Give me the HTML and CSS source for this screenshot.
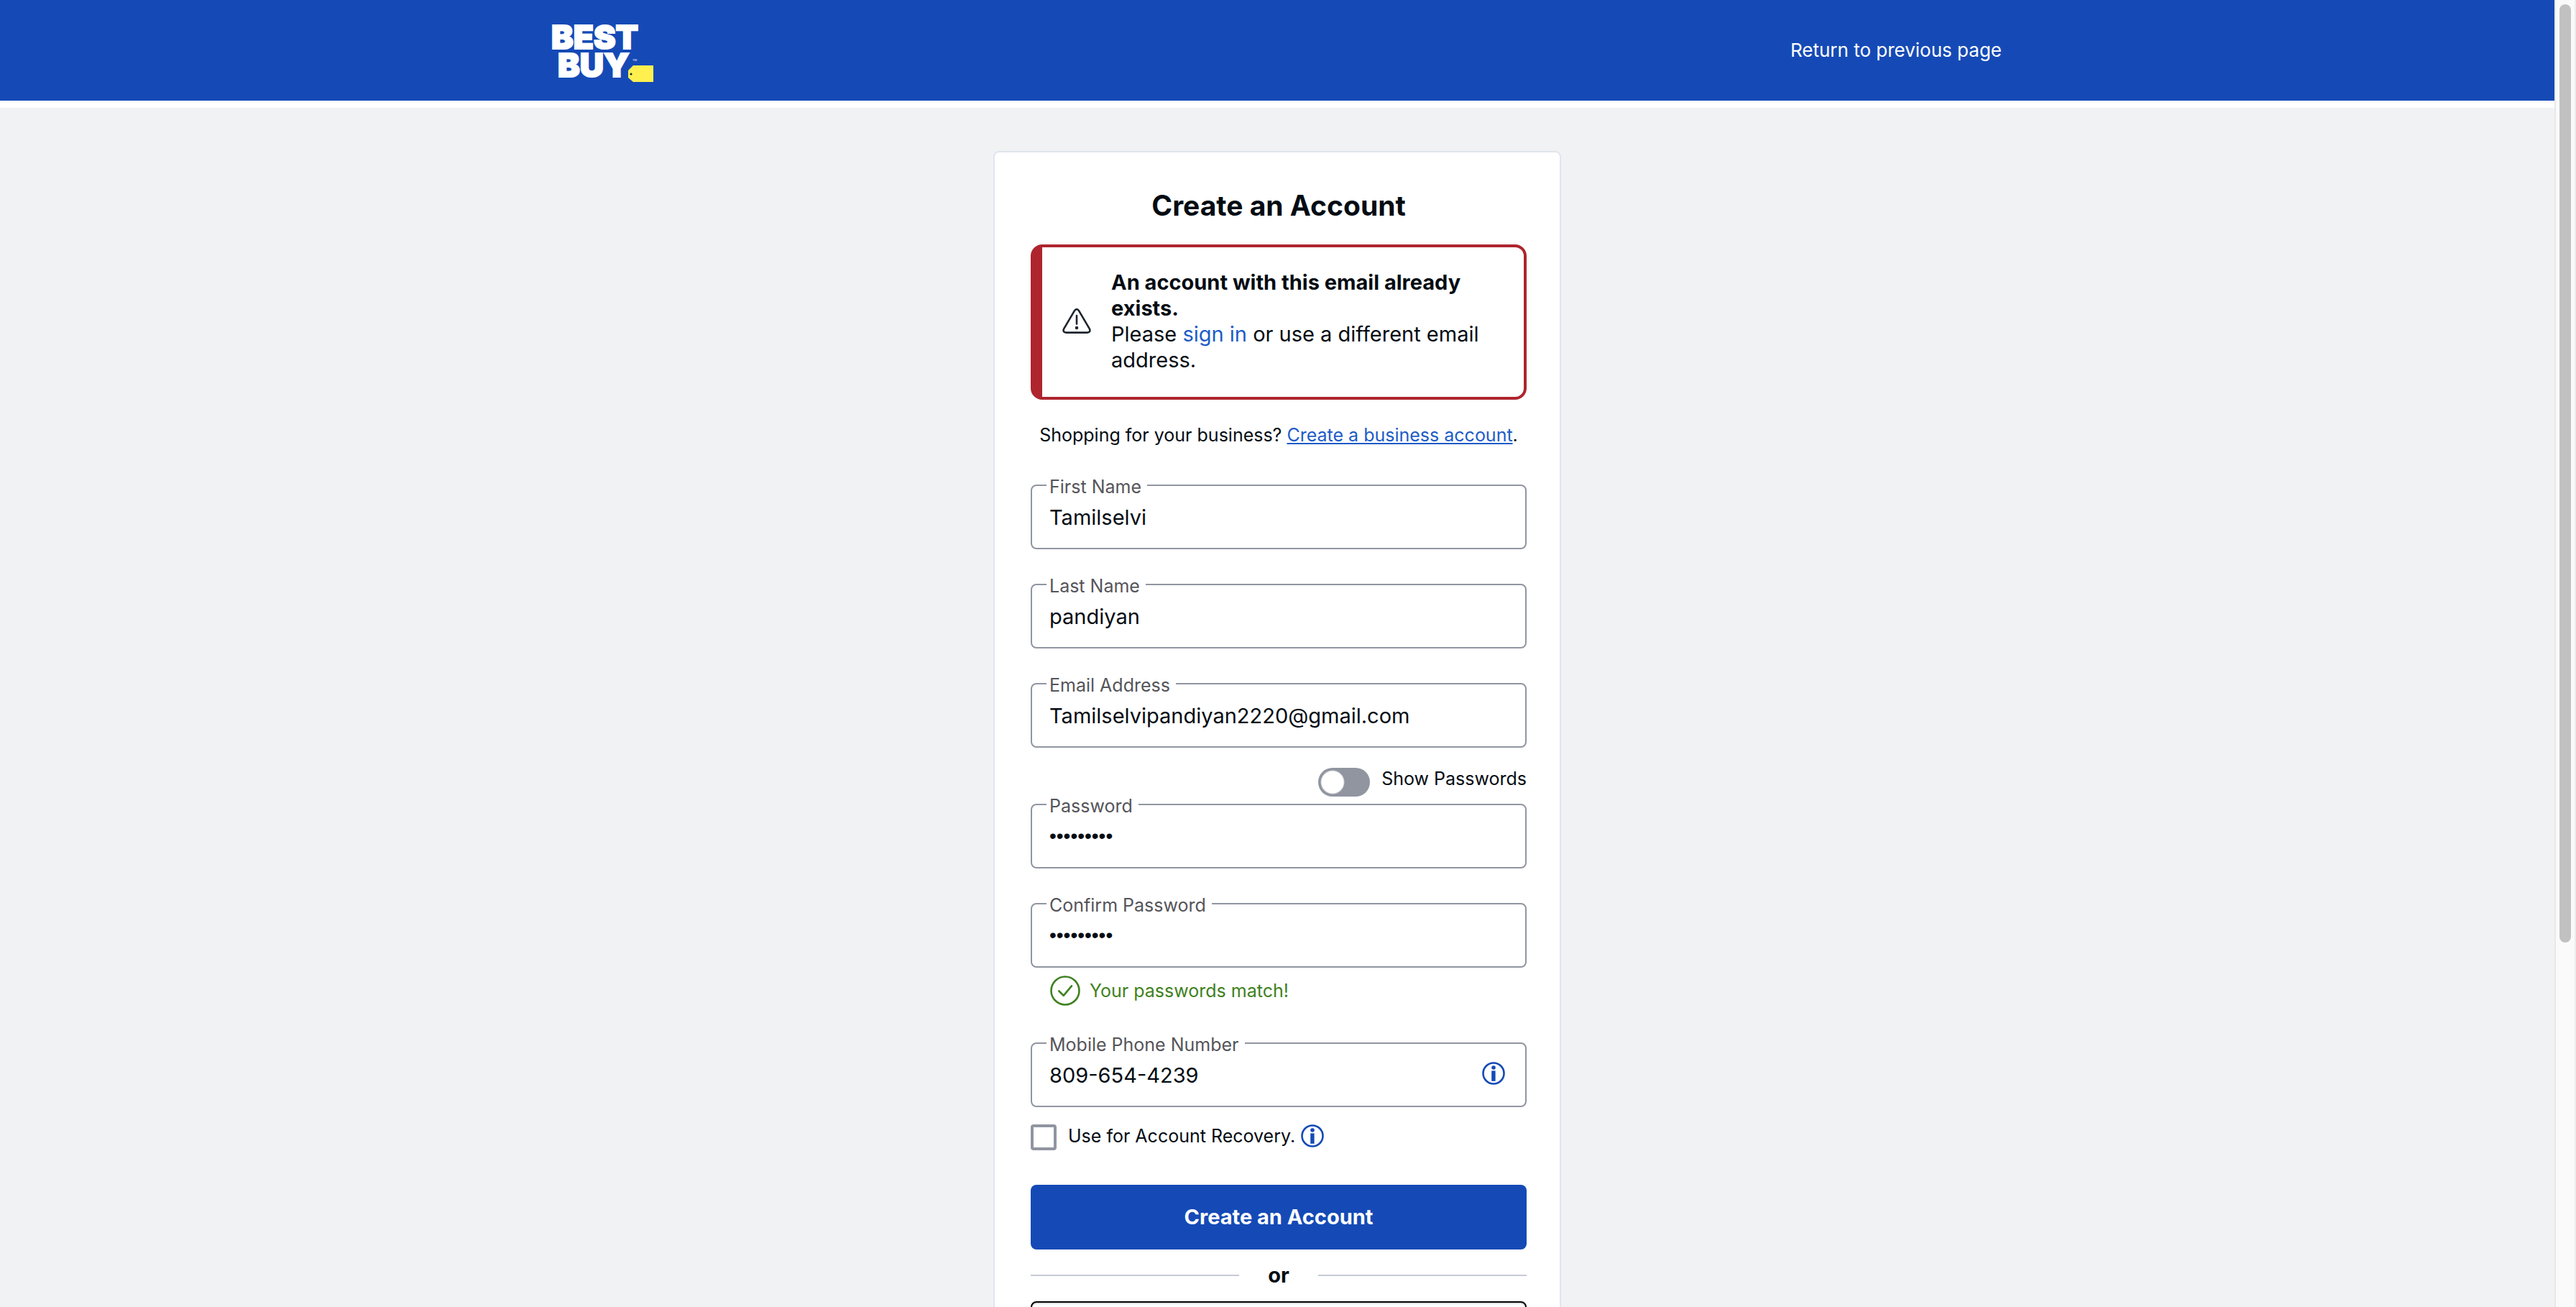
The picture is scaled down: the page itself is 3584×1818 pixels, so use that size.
FILE: index.html
```html
<!DOCTYPE html>
<html lang="en">
<head>
<meta charset="utf-8">
<title>Create an Account</title>
<link rel="stylesheet" href="styles.css">
</head>
<body>
<svg class="sprite" aria-hidden="true">
  <symbol id="info" viewBox="0 0 32 32">
    <circle cx="16" cy="16" r="14.5" fill="none" stroke="currentColor" stroke-width="2.6"/>
    <circle cx="16" cy="8" r="2.8" fill="currentColor"/>
    <path d="M13.2 12.4h5.4v14.4h-5.4z" fill="currentColor"/>
  </symbol>
</svg>
<div class="viewport">
  <div class="page">
    <header class="header">
      <div class="header-inner">
        <a class="logo" href="#" aria-label="Best Buy">
          <svg width="142" height="84" viewBox="0 0 142 84">
            <g class="logo-text">
              <text x="-2" y="40">BEST</text>
              <text x="7" y="79">BUY</text>
            </g>
            <text class="logo-tm" x="111" y="57">TM</text>
            <path d="M112 63l-7 7v10l7 6h28V63z" fill="#fff04f"/>
            <circle cx="109" cy="75" r="1.6" fill="#1d252c"/>
          </svg>
        </a>
        <a class="return" href="#">Return to previous page</a>
      </div>
    </header>
    <main class="main">
      <form class="card">
        <h1 class="title">Create an Account</h1>
        <div class="alert" role="alert">
          <svg class="alert-icon" width="40" height="36" viewBox="0 0 40 36" fill="none" stroke="#1d252c" stroke-width="2.6" stroke-linecap="round" stroke-linejoin="round">
            <path d="M17 3.2q3-4 6 0l15 25.400q1.600 4.800-3.400 5H5.400q-5-.2-3.400-5z"/>
            <path d="M20 10v11.500"/>
            <circle cx="20" cy="27" r="1" fill="#1d252c"/>
          </svg>
          <p class="alert-text"><strong>An account with this email already exists.</strong><br>Please <a class="link" href="#">sign in</a> or use a different email address.</p>
        </div>
        <p class="business">Shopping for your business? <a class="link underlined" href="#">Create a business account</a>.</p>
        <div class="field">
          <label class="label" for="first">First Name</label>
          <input class="input" id="first" type="text" value="Tamilselvi">
        </div>
        <div class="field">
          <label class="label" for="last">Last Name</label>
          <input class="input" id="last" type="text" value="pandiyan">
        </div>
        <div class="field">
          <label class="label" for="email">Email Address</label>
          <input class="input" id="email" type="text" value="Tamilselvipandiyan2220@gmail.com">
        </div>
        <div class="show">
          <input class="switch" id="show" type="checkbox" role="switch">
          <label for="show">Show Passwords</label>
        </div>
        <div class="field">
          <label class="label" for="pass">Password</label>
          <input class="input secret" id="pass" type="password" value="secret123">
        </div>
        <div class="field confirm">
          <label class="label" for="confirm">Confirm Password</label>
          <input class="input secret" id="confirm" type="password" value="secret123">
        </div>
        <p class="match">
          <svg width="42" height="42" viewBox="0 0 42 42" fill="none" stroke="currentColor" stroke-width="2.6" stroke-linecap="round" stroke-linejoin="round">
            <circle cx="21" cy="21" r="19.500"/>
            <path d="M12.300 21.500l6.400 6.300 11.300-13.500"/>
          </svg>
          Your passwords match!
        </p>
        <div class="field phone">
          <label class="label" for="phone">Mobile Phone Number</label>
          <input class="input" id="phone" type="text" value="809-654-4239">
          <button class="info" type="button" aria-label="Phone number information"><svg width="32" height="32"><use href="#info"/></svg></button>
        </div>
        <div class="recovery">
          <input class="check" id="recovery" type="checkbox">
          <label for="recovery">Use for Account Recovery.</label>
          <button class="info" type="button" aria-label="Account recovery information"><svg width="32" height="32"><use href="#info"/></svg></button>
        </div>
        <button class="submit" type="submit">Create an Account</button>
        <div class="or">or</div>
        <button class="provider" type="button" aria-label="Continue with another account"></button>
      </form>
    </main>
  </div>
  <div class="rail"><div class="thumb"></div></div>
</div>
</body>
</html>
```
FILE: styles.css
```css
* { box-sizing: border-box; }

body {
  margin: 0;
  font-family: Inter, "Liberation Sans", sans-serif;
  font-size: 25px;
  line-height: 36px;
  color: #040c13;
}

h1, p { margin: 0; }

button, input {
  margin: 0;
  padding: 0;
  font: inherit;
  color: inherit;
}

.sprite { display: none; }

.viewport {
  display: flex;
  height: 100vh;
  overflow: hidden;
  background: #f0f2f4;
}

.page {
  flex: 1;
  min-width: 0;
}

.header {
  height: 150px;
  background: #154ab6;
  border-bottom: 10px solid #fff;
}

.header-inner {
  display: flex;
  justify-content: space-between;
  align-items: center;
  max-width: 2016px;
  height: 100%;
  margin: 0 auto;
}

.logo svg {
  display: block;
  overflow: visible;
}

.logo-text {
  font-size: 46px;
  font-weight: 900;
  fill: #fff;
  stroke: #fff;
  stroke-width: 2px;
}

.logo-tm {
  font-size: 4px;
  fill: #fff;
}

.return {
  font-size: 26px;
  color: #fff;
  text-decoration: none;
}

.card {
  display: flex;
  flex-direction: column;
  width: 790px;
  margin: 60px auto 0;
  padding: 50px 46px 60px 50px;
  background: #fff;
  border: 2px solid #e0e5ee;
  border-radius: 8px;
}

.title {
  font-size: 39px;
  line-height: 48px;
  text-align: center;
}

.alert {
  display: flex;
  align-items: center;
  gap: 28px;
  margin-top: 30px;
  padding: 31px 28px 33px;
  font-size: 29px;
  border: 4px solid #ae252e;
  border-left-width: 16px;
  border-radius: 16px;
}

.alert-icon { flex: none; }

.link {
  color: #1d5cc7;
  text-decoration: none;
}

.underlined { text-decoration: underline; }

.business {
  margin: 31px 0 51px;
  text-align: center;
}

.field {
  position: relative;
  height: 90px;
  margin-bottom: 48px;
}

.label {
  position: absolute;
  top: -15px;
  left: 22px;
  padding: 0 8px 0 4px;
  color: #55555a;
  background: #fff;
}

.input {
  width: 100%;
  height: 100%;
  padding: 0 24px;
  font-size: 29px;
  background: #fff;
  border: 2px solid #9095a0;
  border-radius: 8px;
}

.secret {
  font-family: "Liberation Sans", sans-serif;
  font-size: 28px;
}

.show {
  display: flex;
  justify-content: flex-end;
  gap: 16px;
  margin: -20px 0 10px;
  line-height: 30px;
}

.switch {
  appearance: none;
  width: 72px;
  height: 40px;
  background: radial-gradient(circle at 20px 20px, #fff 15px, #9095a0 17px);
  border-radius: 20px;
}

.confirm { margin-bottom: 11px; }

.match {
  display: flex;
  align-items: center;
  gap: 13px;
  margin: 0 0 51px 27px;
  color: #3f8120;
}

.phone { margin-bottom: 24px; }

.info {
  display: block;
  height: 32px;
  color: #154ab6;
  background: none;
  border: 0;
}

.info svg { display: block; }

.field .info {
  position: absolute;
  top: 27px;
  right: 30px;
}

.recovery {
  display: flex;
  margin-bottom: 48px;
  line-height: 32px;
}

.recovery label { margin: 0 8px 0 16px; }

.check {
  appearance: none;
  width: 36px;
  height: 36px;
  background: #fff;
  border: 4px solid #9095a0;
  border-radius: 4px;
}

.submit {
  height: 90px;
  font-size: 29px;
  font-weight: 700;
  color: #fff;
  background: #154ab6;
  border: 0;
  border-radius: 8px;
}

.or {
  display: flex;
  align-items: center;
  margin: 18px 0;
  font-size: 29px;
  font-weight: 700;
}

.or::before,
.or::after {
  content: "";
  flex: 1;
  height: 2px;
  background: #c5cad5;
}

.or::before { margin-right: 40px; }
.or::after { margin-left: 40px; }

.provider {
  height: 90px;
  background: #fff;
  border: 2px solid #000;
  border-radius: 8px;
  box-shadow: inset 0 2px #ddd;
}

.rail {
  display: flex;
  justify-content: center;
  width: 30px;
  padding-top: 6px;
  background: #fafafa;
  border-left: 2px solid #e8e8e8;
  border-right: 2px solid #ededed;
}

.thumb {
  width: 16px;
  height: 72%;
  background: #c1c1c1;
  border-radius: 8px;
}
```
